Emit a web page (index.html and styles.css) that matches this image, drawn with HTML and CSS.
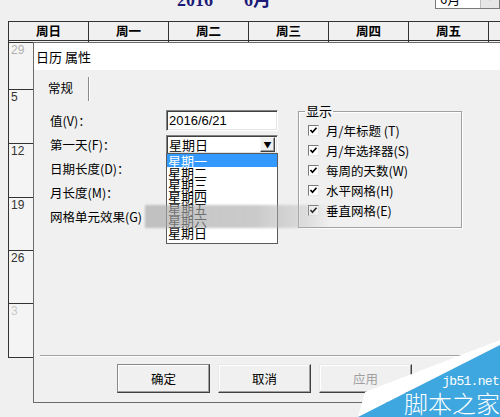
FILE: index.html
```html
<!DOCTYPE html>
<html lang="zh-CN">
<head>
<meta charset="utf-8">
<title>日历 属性</title>
<link rel="stylesheet" href="styles.css">
</head>
<body>
<div class="screen">
  <div class="topbar">
    <div class="cal-title"><span>2016</span><span>6月</span></div>
    <div class="month-select"><span class="ms-text">6月</span><span class="ms-btn">▼</span></div>
  </div>

  <div class="calendar">
    <div class="hd">周日</div><div class="hd">周一</div><div class="hd">周二</div><div class="hd">周三</div><div class="hd">周四</div><div class="hd">周五</div><div class="hd">周六</div>
    <div class="day other">29</div><div class="day"></div><div class="day"></div><div class="day"></div><div class="day"></div><div class="day"></div><div class="day"></div>
    <div class="day">5</div><div class="day"></div><div class="day"></div><div class="day"></div><div class="day"></div><div class="day"></div><div class="day"></div>
    <div class="day">12</div><div class="day"></div><div class="day"></div><div class="day"></div><div class="day"></div><div class="day"></div><div class="day"></div>
    <div class="day">19</div><div class="day"></div><div class="day"></div><div class="day"></div><div class="day"></div><div class="day"></div><div class="day"></div>
    <div class="day">26</div><div class="day"></div><div class="day"></div><div class="day"></div><div class="day"></div><div class="day"></div><div class="day"></div>
    <div class="day faint">3</div><div class="day"></div><div class="day"></div><div class="day"></div><div class="day"></div><div class="day"></div><div class="day"></div>
  </div>

  <div class="dialog">
    <div class="titlebar"><span>日历 属性</span><span class="close">✕</span></div>
    <div class="tabs"><div class="tab">常规</div></div>
    <div class="tabpage">
      <div class="form">
        <div class="lbl">值(V)：</div>
        <div class="ctl"><div class="input">2016/6/21</div></div>
        <div class="lbl">第一天(F)：</div>
        <div class="ctl">
          <div class="combo-wrap">
            <div class="combo"><span class="combo-text">星期日</span><span class="combo-btn">▼</span></div>
            <ul class="droplist">
              <li class="sel">星期一</li>
              <li>星期二</li>
              <li>星期三</li>
              <li>星期四</li>
              <li>星期五</li>
              <li>星期六</li>
              <li>星期日</li>
            </ul>
          </div>
        </div>
        <div class="lbl">日期长度(D)：</div>
        <div class="ctl"></div>
        <div class="lbl">月长度(M)：</div>
        <div class="ctl"></div>
        <div class="lbl">网格单元效果(G)</div>
        <div class="ctl"></div>
      </div>
      <fieldset class="group">
        <legend>显示</legend>
        <div class="chk"><span class="cb"><svg viewBox="0 0 9 9"><path d="M1.5 4 L3.5 6.3 L7.5 1.8"/></svg></span>月/年标题 (T)</div>
        <div class="chk"><span class="cb"><svg viewBox="0 0 9 9"><path d="M1.5 4 L3.5 6.3 L7.5 1.8"/></svg></span>月/年选择器(S)</div>
        <div class="chk"><span class="cb"><svg viewBox="0 0 9 9"><path d="M1.5 4 L3.5 6.3 L7.5 1.8"/></svg></span>每周的天数(W)</div>
        <div class="chk"><span class="cb"><svg viewBox="0 0 9 9"><path d="M1.5 4 L3.5 6.3 L7.5 1.8"/></svg></span>水平网格(H)</div>
        <div class="chk"><span class="cb"><svg viewBox="0 0 9 9"><path d="M1.5 4 L3.5 6.3 L7.5 1.8"/></svg></span>垂直网格(E)</div>
      </fieldset>
    </div>
    <div class="separator"></div>
    <div class="buttons">
      <button class="btn default">确定</button>
      <button class="btn">取消</button>
      <button class="btn disabled">应用</button>
    </div>
  </div>

  <div class="band"></div>

  <div class="watermark">
    <svg class="wm-shape" viewBox="0 0 142 77" width="142" height="77">
      <polygon points="7,52 142,0 142,5 0,77" fill="#ffffff"/>
      <polygon points="0,77 142,5 142,77" fill="#3ea7df"/>
    </svg>
    <span class="wm-url">jb51.net</span>
    <span class="wm-name">脚本之家</span>
  </div>
</div>
</body>
</html>
```
FILE: styles.css
```css
* { box-sizing: border-box; }
html, body { margin: 0; padding: 0; }
body {
  width: 500px;
  height: 417px;
  overflow: hidden;
  background: #f0f0f0;
  font-family: "Noto Sans CJK SC", "Liberation Sans", sans-serif;
  font-size: 12.5px;
  color: #000;
}
.screen {
  position: relative;
  width: 500px;
  height: 417px;
  overflow: hidden;
}

/* top bar */
.topbar {
  height: 21px;
  display: flex;
  align-items: flex-start;
}
.cal-title {
  margin-left: 177px;
  margin-top: -9px;
  display: flex;
  gap: 31px;
  font-family: "Liberation Serif", "Noto Sans CJK SC", serif;
  font-weight: bold;
  font-size: 18px;
  line-height: 18px;
  color: #1b1b78;
}
.month-select {
  margin-left: auto;
  margin-top: -12px;
  width: 65px;
  height: 21px;
  display: flex;
  background: #fff;
  border: 1px solid #7a7a7a;
}
.ms-text {
  flex: 1;
  padding-left: 4px;
  font-size: 13px;
  line-height: 19px;
}
.ms-btn {
  width: 19px;
  background: #e6e6e6;
  border-left: 1px solid #bdbdbd;
  font-size: 8px;
  line-height: 15px;
  text-align: center;
}

/* calendar */
.calendar {
  display: grid;
  grid-template-columns: repeat(7, 80px);
  grid-template-rows: 21px 47px 54px 54px 53px 53px 54px;
  margin-left: 8px;
  width: 561px;
  border-top: 1px solid #333;
  border-left: 1px solid #333;
  background: #f4f4f4;
}
.hd {
  border-right: 1px solid #333;
  border-bottom: 3px double #333;
  text-align: center;
  font-weight: bold;
  font-size: 12.5px;
  line-height: 18px;
  background: #f0f0f0;
}
.day {
  border-right: 1px solid #333;
  border-bottom: 1px solid #333;
  padding: 1px 0 0 2px;
  font-family: "Liberation Sans", sans-serif;
  font-size: 12px;
  line-height: 13px;
  color: #333;
}
.day.other { color: #b0b0b0; }
.day.faint { color: #cacaca; }

/* dialog */
.dialog {
  position: absolute;
  left: 33px;
  top: 42px;
  width: 480px;
  height: 361px;
  background: #f0f0f0;
  border: 1px solid #6b6b6b;
  display: flex;
  flex-direction: column;
}
.titlebar {
  height: 27px;
  background: #fff;
  display: flex;
  align-items: center;
  padding-left: 2px;
  font-size: 13px;
}
.close {
  margin-left: auto;
  margin-right: 3px;
  font-size: 12px;
  color: #333;
}
.tabs {
  height: 31px;
  display: flex;
  align-items: flex-start;
}
.tab {
  margin-left: 13px;
  margin-top: 7px;
  width: 42px;
  height: 24px;
  padding-left: 1px;
  line-height: 21px;
  border-right: 1px solid #8a8a8a;
  box-shadow: 1px 0 0 #ffffff;
}
.tabpage {
  flex: 1;
  display: flex;
  align-items: flex-start;
  padding-top: 8px;
  padding-left: 16px;
}
.form {
  display: grid;
  grid-template-columns: 116px 112px;
  grid-auto-rows: 24px;
}
.lbl {
  line-height: 24px;
  white-space: nowrap;
}
.ctl {
  display: flex;
  align-items: center;
}
.input, .combo {
  width: 112px;
  background: #fff;
  border: 1px solid;
  border-color: #828282 #ffffff #ffffff #828282;
  box-shadow: inset 1px 1px 0 #404040, inset -1px -1px 0 #e3e3e3;
}
.input {
  height: 21px;
  margin-top: -2px;
  padding-left: 2px;
  font-family: "Liberation Sans", sans-serif;
  font-size: 13px;
  line-height: 19px;
}
.combo-wrap {
  position: relative;
}
.combo {
  height: 19px;
  margin-top: -2px;
  display: flex;
  align-items: center;
  padding: 0 2px 0 2px;
}
.combo-text {
  flex: 1;
  font-size: 13px;
  line-height: 17px;
}
.combo-btn {
  width: 15px;
  height: 15px;
  background: #f0f0f0;
  border: 1px solid;
  border-color: #f8f8f8 #404040 #404040 #f8f8f8;
  box-shadow: inset -1px -1px 0 #a0a0a0;
  font-size: 8px;
  line-height: 13px;
  text-align: center;
  color: #000;
}
.droplist {
  position: absolute;
  left: 0;
  top: 16px;
  width: 112px;
  margin: 0;
  padding: 0 0 4px 0;
  list-style: none;
  background: #fff;
  border: 1px solid #5a5a5a;
}
.droplist li {
  height: 12px;
  padding-left: 1px;
  font-size: 13px;
  line-height: 12px;
  color: #000;
}
.droplist li.sel {
  height: 13px;
  line-height: 13px;
  background: #3399ff;
  color: #fff;
}

/* group box */
.group {
  margin: -5px 0 0 20px;
  padding: 0 0 6px 6px;
  width: 164px;
  height: 124px;
  min-inline-size: 0;
  border: 1px solid #a0a0a0;
  box-shadow: inset 1px 1px 0 #ffffff, 1px 1px 0 #ffffff;
}
.group legend {
  padding: 0 1px;
  font-size: 13px;
  line-height: 14px;
}
.chk {
  height: 20px;
  display: flex;
  align-items: center;
  margin-left: 3px;
  white-space: nowrap;
}
.chk:first-of-type { margin-top: 2px; }
.cb {
  width: 11px;
  height: 11px;
  margin-right: 7px;
  background: #fff;
  border: 1px solid;
  border-color: #7a7a7a #e8e8e8 #e8e8e8 #7a7a7a;
  display: flex;
}
.cb svg {
  width: 9px;
  height: 9px;
  fill: none;
  stroke: #000;
  stroke-width: 1.7;
}

/* footer */
.separator {
  margin-left: 6px;
  width: 430px;
  height: 2px;
  border-top: 1px solid #a0a0a0;
  border-bottom: 1px solid #ffffff;
}
.buttons {
  display: flex;
  gap: 8px;
  padding-left: 83px;
  margin-top: 7px;
  margin-bottom: 9px;
}
.btn {
  width: 93px;
  height: 29px;
  padding: 0;
  background: #f0f0f0;
  font-family: "Noto Sans CJK SC", sans-serif;
  font-size: 12.5px;
  color: #000;
  border: 1px solid;
  border-color: #e8e8e8 #404040 #404040 #e8e8e8;
  box-shadow: inset -1px -1px 0 #a0a0a0, inset 1px 1px 0 #ffffff;
}
.btn.default {
  border-color: #8a8a8a #404040 #404040 #8a8a8a;
}
.btn.disabled {
  color: #a0a0a0;
}

/* overlays */
.band {
  position: absolute;
  left: 145px;
  top: 205px;
  width: 185px;
  height: 23px;
  background: linear-gradient(to right, rgba(170,170,170,0.68) 0%, rgba(170,170,170,0.62) 60%, rgba(185,185,185,0.4) 85%, rgba(200,200,200,0) 100%);
  filter: blur(0.8px);
}
.watermark {
  position: absolute;
  right: 0;
  bottom: 0;
  width: 142px;
  height: 77px;
}
.wm-shape {
  position: absolute;
  left: 0;
  top: 0;
}
.wm-url {
  position: absolute;
  right: 1px;
  top: 35px;
  font-family: "Liberation Mono", monospace;
  font-size: 13px;
  letter-spacing: -0.7px;
  line-height: 14px;
  color: #fff;
}
.wm-name {
  position: absolute;
  right: 0;
  top: 50px;
  font-family: "Noto Sans CJK SC", sans-serif;
  font-weight: 300;
  font-size: 24px;
  line-height: 26px;
  color: #fff;
}
```
